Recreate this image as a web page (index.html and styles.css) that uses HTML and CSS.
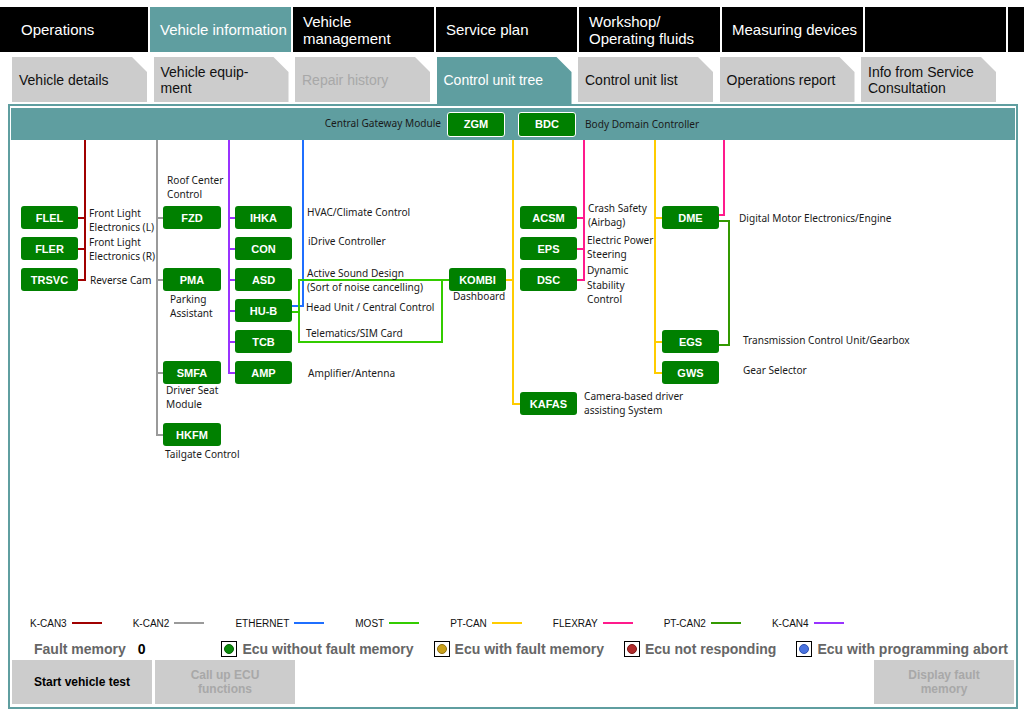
FILE: index.html
```html
<!DOCTYPE html>
<html lang="en">
<head>
<meta charset="utf-8">
<title>Control unit tree</title>
<link rel="stylesheet" href="styles.css">
</head>
<body>
<div class="topbar">
  <div class="tab first">Operations</div>
  <div class="tab active">Vehicle information</div>
  <div class="tab">Vehicle<br>management</div>
  <div class="tab">Service plan</div>
  <div class="tab">Workshop/<br>Operating fluids</div>
  <div class="tab">Measuring devices</div>
  <div class="tab"></div>
  <div class="tab last"></div>
</div>
<div class="subbar">
  <div class="sub">Vehicle details</div>
  <div class="sub">Vehicle equip-<br>ment</div>
  <div class="sub disabled">Repair history</div>
  <div class="sub active">Control unit tree</div>
  <div class="sub">Control unit list</div>
  <div class="sub">Operations report</div>
  <div class="sub">Info from Service<br>Consultation</div>
</div>
<div class="frame">
  <div class="header">
    <span class="hlabel hleft">Central Gateway Module</span>
    <div class="ecu hecu">ZGM</div>
    <div class="ecu hecu bdc">BDC</div>
    <span class="hlabel hright">Body Domain Controller</span>
  </div>
  <div class="diagram">
    <svg class="wires" width="1004" height="476" viewBox="11 140 1004 476" xmlns="http://www.w3.org/2000/svg" fill="none" stroke-width="2">
      <path stroke="#a00000" d="M85 140 V280 H78 M78 218 H85 M78 249 H85"/>
      <path stroke="#9a9a9a" d="M157 140 V435 H163 M157 218 H163 M157 280 H163 M157 373 H163"/>
      <path stroke="#9933ff" d="M229 140 V373 H235 M229 218 H235 M229 249 H235 M229 280 H235 M229 311 H235 M229 342 H235"/>
      <path stroke="#1f6fff" d="M303 140 V306 H292"/>
      <path stroke="#33cc00" d="M449 280 H299 V342 H442 V280 M292 312 H299"/>
      <path stroke="#ffcc00" d="M513 140 V404 H520 M506 280 H513"/>
      <path stroke="#ff1a8c" d="M584 140 V280 H577 M577 218 H584 M577 249 H584"/>
      <path stroke="#ffcc00" d="M655 140 V373 H662 M655 218 H662 M655 342 H662"/>
      <path stroke="#ff1a8c" d="M724 140 V215 H719"/>
      <path stroke="#339900" d="M719 221 H729 V345 H719"/>
    </svg>

    <div class="ecu node cA r1">FLEL</div>
    <div class="ecu node cA r2">FLER</div>
    <div class="ecu node cA r3">TRSVC</div>

    <div class="ecu node cB r1">FZD</div>
    <div class="ecu node cB r3">PMA</div>
    <div class="ecu node cB r6">SMFA</div>
    <div class="ecu node cB r8">HKFM</div>

    <div class="ecu node cC r1">IHKA</div>
    <div class="ecu node cC r2">CON</div>
    <div class="ecu node cC r3">ASD</div>
    <div class="ecu node cC r4">HU-B</div>
    <div class="ecu node cC r5">TCB</div>
    <div class="ecu node cC r6">AMP</div>

    <div class="ecu node cK r3">KOMBI</div>

    <div class="ecu node cD r1">ACSM</div>
    <div class="ecu node cD r2">EPS</div>
    <div class="ecu node cD r3">DSC</div>
    <div class="ecu node cD r7">KAFAS</div>

    <div class="ecu node cE r1">DME</div>
    <div class="ecu node cE r5">EGS</div>
    <div class="ecu node cE r6">GWS</div>

    <div class="lbl l-flel">Front Light<br>Electronics (L)</div>
    <div class="lbl l-fler">Front Light<br>Electronics (R)</div>
    <div class="lbl l-trsvc">Reverse Cam</div>
    <div class="lbl l-fzd">Roof Center<br>Control</div>
    <div class="lbl l-pma">Parking<br>Assistant</div>
    <div class="lbl l-smfa">Driver Seat<br>Module</div>
    <div class="lbl l-hkfm">Tailgate Control</div>
    <div class="lbl l-ihka">HVAC/Climate Control</div>
    <div class="lbl l-con">iDrive Controller</div>
    <div class="lbl l-asd">Active Sound Design<br>(Sort of noise cancelling)</div>
    <div class="lbl l-hub">Head Unit / Central Control</div>
    <div class="lbl l-tcb">Telematics/SIM Card</div>
    <div class="lbl l-amp">Amplifier/Antenna</div>
    <div class="lbl l-kombi">Dashboard</div>
    <div class="lbl l-acsm">Crash Safety<br>(Airbag)</div>
    <div class="lbl l-eps">Electric Power<br>Steering</div>
    <div class="lbl l-dsc">Dynamic<br>Stability<br>Control</div>
    <div class="lbl l-kafas">Camera-based driver<br>assisting System</div>
    <div class="lbl l-dme">Digital Motor Electronics/Engine</div>
    <div class="lbl l-egs">Transmission Control Unit/Gearbox</div>
    <div class="lbl l-gws">Gear Selector</div>
  </div>

  <div class="legend">
    <div class="bus">K-CAN3<span class="swatch kcan3"></span></div>
    <div class="bus">K-CAN2<span class="swatch kcan2"></span></div>
    <div class="bus">ETHERNET<span class="swatch eth"></span></div>
    <div class="bus">MOST<span class="swatch most"></span></div>
    <div class="bus">PT-CAN<span class="swatch ptcan"></span></div>
    <div class="bus">FLEXRAY<span class="swatch flexray"></span></div>
    <div class="bus">PT-CAN2<span class="swatch ptcan2"></span></div>
    <div class="bus">K-CAN4<span class="swatch kcan4"></span></div>
  </div>

  <div class="status">
    <span class="fm">Fault memory</span>
    <span class="fmcount">0</span>
    <div class="states">
      <div class="state"><span class="dotbox"><span class="dot ok"></span></span>Ecu without fault memory</div>
      <div class="state"><span class="dotbox"><span class="dot fault"></span></span>Ecu with fault memory</div>
      <div class="state"><span class="dotbox"><span class="dot nresp"></span></span>Ecu not responding</div>
      <div class="state"><span class="dotbox"><span class="dot abort"></span></span>Ecu with programming abort</div>
    </div>
  </div>

  <div class="buttons">
    <div class="btn">Start vehicle test</div>
    <div class="btn off">Call up ECU<br>functions</div>
    <div class="btn off right">Display fault<br>memory</div>
  </div>
</div>
</body>
</html>
```
FILE: styles.css
```css
* { box-sizing: border-box; }

body {
  margin: 0;
  width: 1024px;
  height: 712px;
  overflow: hidden;
  background: #fff;
  font-family: "Liberation Sans", Arial, sans-serif;
  color: #111;
}

/* ---------- main tab bar ---------- */
.topbar {
  display: flex;
  gap: 2px;
  margin-top: 7px;
  height: 45px;
  width: 1024px;
  overflow: hidden;
}
.tab {
  flex: 0 0 141px;
  background: #000;
  color: #fff;
  font-size: 15px;
  line-height: 17px;
  padding-left: 10px;
  display: flex;
  align-items: center;
}
.tab.first { flex-basis: 148px; padding-left: 21px; }
.tab.active { background: #5f9ea0; }
.tab.last { flex-basis: 20px; }

/* ---------- sub tab bar ---------- */
.subbar {
  display: flex;
  align-items: flex-start;
  gap: 6.5px;
  margin-top: 5px;
  height: 47px;
  padding-left: 12px;
}
.sub {
  flex: 0 0 135px;
  height: 45px;
  background: #cccccc;
  color: #111;
  font-size: 14px;
  line-height: 16px;
  padding-left: 7px;
  display: flex;
  align-items: center;
  clip-path: polygon(0 0, calc(100% - 15px) 0, 100% 15px, 100% 100%, 0 100%);
}
.sub.disabled { color: #a8a8a8; }
.sub.active {
  background: #5f9ea0;
  color: #fff;
  height: 47px;
  padding-bottom: 2px;
}

/* ---------- frame ---------- */
.frame {
  margin-left: 8px;
  width: 1010px;
  height: 605px;
  border: 2px solid #5f9ea0;
  padding: 2px 1px 3px 1px;
  display: flex;
  flex-direction: column;
}

.header {
  height: 32px;
  flex: 0 0 32px;
  background: #5f9ea0;
  display: flex;
  align-items: center;
}
.hlabel {
  flex: 1 1 0;
  font-family: "Noto Sans", "Open Sans", sans-serif;
  font-size: 10.1px;
  color: #1a1a1a;
  padding-bottom: 3px;
}
.hleft { text-align: right; padding-right: 6px; }
.hright { padding-left: 9px; padding-bottom: 0; }

.ecu {
  background: #008000;
  color: #fff;
  font-family: "Liberation Sans", Arial, sans-serif;
  font-weight: bold;
  font-size: 11px;
  border-radius: 3px;
  display: flex;
  align-items: center;
  justify-content: center;
}
.hecu {
  width: 58px;
  height: 25px;
  border: 1px solid #fff;
}
.hecu.bdc { margin-left: 13px; }

/* ---------- diagram canvas ---------- */
.diagram {
  position: relative;
  flex: 0 0 476px;
  height: 476px;
}
.wires {
  position: absolute;
  left: 0;
  top: 0;
}
.node {
  position: absolute;
  width: 57px;
  height: 23px;
}
.cA { left: 10px; }
.cB { left: 152px; width: 58px; }
.cC { left: 224px; }
.cK { left: 438px; }
.cD { left: 509px; }
.cE { left: 651px; }
.r1 { top: 66px; }
.r2 { top: 97px; }
.r3 { top: 128px; }
.r4 { top: 159px; }
.r5 { top: 190px; }
.r6 { top: 221px; }
.r7 { top: 252px; }
.r8 { top: 283px; }

.lbl {
  position: absolute;
  font-family: "Noto Sans", "Open Sans", sans-serif;
  font-size: 10.1px;
  line-height: 14px;
  color: #1a1a1a;
  white-space: nowrap;
}
.l-flel  { left: 78px;  top: 66px; }
.l-fler  { left: 78px;  top: 95px; }
.l-trsvc { left: 79px;  top: 133px; }
.l-fzd   { left: 156px; top: 33px; }
.l-pma   { left: 159px; top: 152px; }
.l-smfa  { left: 155px; top: 243px; }
.l-hkfm  { left: 154px; top: 307px; }
.l-ihka  { left: 296px; top: 65px; }
.l-con   { left: 297px; top: 94px; }
.l-asd   { left: 296px; top: 126px; }
.l-hub   { left: 295px; top: 160px; }
.l-tcb   { left: 295px; top: 186px; }
.l-amp   { left: 297px; top: 226px; }
.l-kombi { left: 442px; top: 149px; }
.l-acsm  { left: 577px; top: 61px; }
.l-eps   { left: 576px; top: 93px; }
.l-dsc   { left: 576px; top: 123px; line-height: 14.5px; }
.l-kafas { left: 573px; top: 249px; }
.l-dme   { left: 728px; top: 71px; }
.l-egs   { left: 732px; top: 193px; }
.l-gws   { left: 732px; top: 223px; }

/* ---------- bus legend ---------- */
.legend {
  flex: 0 0 14px;
  display: flex;
  align-items: center;
  gap: 31px;
  padding-left: 19px;
  font-size: 10px;
  color: #111;
}
.bus { display: flex; align-items: center; }
.swatch {
  display: inline-block;
  width: 30px;
  height: 2px;
  margin-left: 5px;
}
.kcan3 { background: #a00000; }
.kcan2 { background: #9a9a9a; }
.eth { background: #1f6fff; }
.most { background: #33cc00; }
.ptcan { background: #ffcc00; }
.flexray { background: #ff1a8c; }
.ptcan2 { background: #339900; }
.kcan4 { background: #9933ff; }

/* ---------- status row ---------- */
.status {
  flex: 0 0 22px;
  margin-top: 8px;
  display: flex;
  align-items: center;
  font-size: 14px;
  font-weight: bold;
  color: #666;
}
.fm { padding-left: 23px; }
.fmcount { margin-left: 12px; color: #000; }
.states {
  margin-left: auto;
  padding-right: 7px;
  display: flex;
  gap: 20px;
}
.state { display: flex; align-items: center; }
.dotbox {
  width: 16px;
  height: 16px;
  border: 1px solid #000;
  background: #fff;
  display: flex;
  align-items: center;
  justify-content: center;
  margin-right: 5px;
}
.dot {
  width: 10px;
  height: 10px;
  border-radius: 50%;
}
.ok { background: #0a8a0a; border: 1px solid #065f06; }
.fault { background: #c9a01a; border: 1px solid #8f7010; }
.nresp { background: #b02a2a; border: 1px solid #7a1616; }
.abort { background: #4a73e0; border: 1px solid #2c4fb0; }

/* ---------- buttons ---------- */
.buttons {
  flex: 0 0 44px;
  display: flex;
  gap: 3px;
  padding: 0 1px;
}
.btn {
  width: 140px;
  height: 44px;
  background: #cccccc;
  color: #000;
  font-size: 12px;
  font-weight: bold;
  line-height: 14px;
  text-align: center;
  display: flex;
  align-items: center;
  justify-content: center;
}
.btn.off { color: #a8a8a8; }
.btn.right { margin-left: auto; }
```
